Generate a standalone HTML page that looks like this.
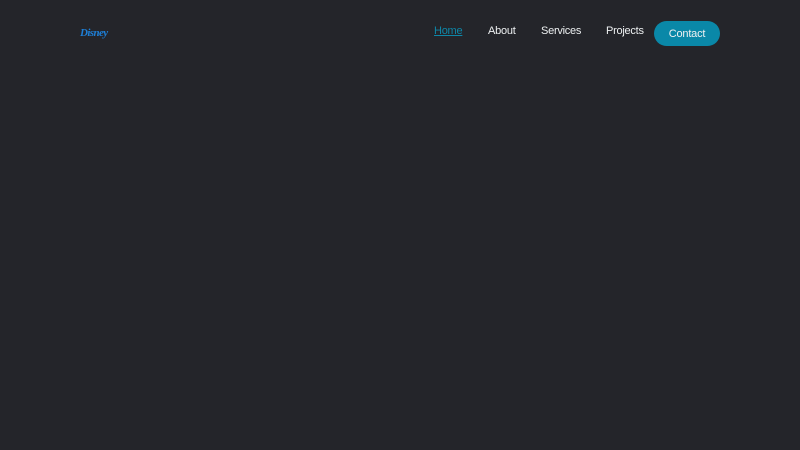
<!DOCTYPE html>
<html><head><meta charset="utf-8"><style>
html,body{margin:0;padding:0;width:800px;height:450px;background:#24252a;overflow:hidden;font-family:"Liberation Sans",sans-serif;}
.logo{position:absolute;left:80px;top:27px;color:#1e7fd6;font-family:"Liberation Serif",serif;font-style:italic;font-weight:bold;font-size:11px;letter-spacing:-0.6px;}
.nav a{position:absolute;top:25px;font-size:11px;letter-spacing:-0.25px;color:#edf0f1;text-decoration:none;}
.nav a.home{color:#0e87a8;text-decoration:underline;}
.btn{position:absolute;left:654px;top:21px;width:66px;height:25px;border-radius:13px;background:#0a88a8;color:#edf0f1;font-size:11px;letter-spacing:-0.2px;text-align:center;line-height:26px;}
</style></head><body>
<div class="logo">Disney</div>
<div class="nav">
<a class="home" style="left:434px">Home</a>
<a style="left:488px">About</a>
<a style="left:541px">Services</a>
<a style="left:606px">Projects</a>
</div>
<div class="btn">Contact</div>
</body></html>
